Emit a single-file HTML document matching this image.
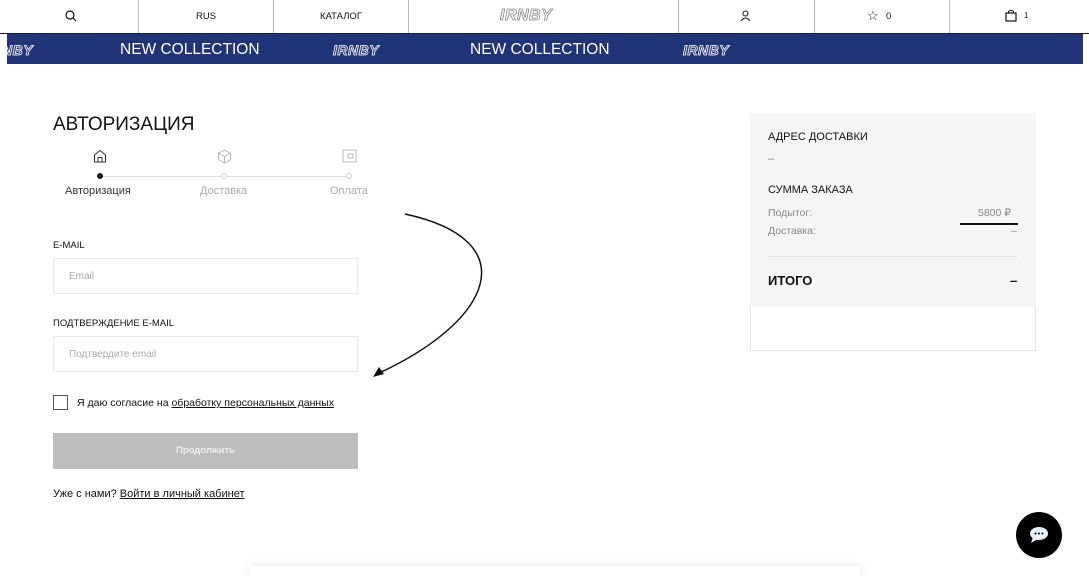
<!DOCTYPE html>
<html><head><meta charset="utf-8"><style>
*{box-sizing:border-box;margin:0;padding:0}
body{width:1089px;height:571px;overflow:hidden;background:#fff;font-family:"Liberation Sans",sans-serif;color:#111;position:relative}
.a{position:absolute}
.hd{top:0;left:0;width:1089px;height:34px;border-bottom:1px solid #222}
.vl{top:0;width:1px;height:33px;background:#bbb}
.c{font-size:9.5px;text-align:center;top:11px}
.logo{font-weight:bold;font-style:italic;color:transparent;-webkit-text-stroke:0.8px #888;letter-spacing:0.5px}
.band{top:34px;left:7px;width:1076px;height:30px;background:#213477}
.band span{position:absolute;top:7px;color:#fff;font-size:15.5px}
.band span.logo{color:transparent;-webkit-text-stroke:0.8px #fff;font-size:14px;top:8px}
.lbl{font-size:9.5px}
.inp{border:1px solid #e8e8e8;width:305px;height:36px;left:53px;font-size:10px;color:#aaa;padding:12px 15px}
.g{color:#888}
</style></head><body>
<div class="a hd"></div>
<div class="a vl" style="left:138px"></div><div class="a vl" style="left:273px"></div><div class="a vl" style="left:408px"></div><div class="a vl" style="left:678px"></div><div class="a vl" style="left:814px"></div><div class="a vl" style="left:949px"></div>
<svg class="a" style="left:65px;top:10px" width="12" height="12" viewBox="0 0 12 12"><circle cx="5" cy="5" r="4" fill="none" stroke="#111" stroke-width="1.2"/><line x1="8" y1="8" x2="11" y2="11" stroke="#111" stroke-width="1.2"/></svg>
<div class="a c" style="left:180px;width:52px">RUS</div>
<div class="a c" style="left:306px;width:70px">КАТАЛОГ</div>
<div class="a logo" style="left:500px;top:7px;font-size:16px">IRNBY</div>
<svg class="a" style="left:740px;top:10px" width="11" height="12" viewBox="0 0 11 12"><circle cx="5.5" cy="3.5" r="2.5" fill="none" stroke="#111"/><path d="M1 11 Q5.5 5 10 11" fill="none" stroke="#111"/></svg>
<div class="a" style="left:867px;top:8px;font-size:13px">☆</div><div class="a c" style="left:886px;top:11px">0</div>
<svg class="a" style="left:1005px;top:9px" width="12" height="13" viewBox="0 0 12 13"><rect x="1" y="4" width="10" height="8" fill="none" stroke="#111" stroke-width="1.2"/><path d="M3.5 4V2.5Q6 0 8.5 2.5V4" fill="none" stroke="#111"/></svg><div class="a c" style="left:1024px;top:11px;font-size:8px">1</div>
<div class="a band">
<span class="logo" style="left:-20px">IRNBY</span>
<span style="left:113px">NEW COLLECTION</span>
<span class="logo" style="left:326px">IRNBY</span>
<span style="left:463px">NEW COLLECTION</span>
<span class="logo" style="left:676px">IRNBY</span>
</div>
<div class="a" style="left:53px;top:114px;font-size:19px">АВТОРИЗАЦИЯ</div>
<svg class="a" style="left:93px;top:149px" width="14" height="14" viewBox="0 0 14 14"><path d="M1.5 13V6L7 1.5 12.5 6V13ZM5 13V8.5H9V13" fill="none" stroke="#333"/></svg>
<svg class="a" style="left:217px;top:149px" width="15" height="15" viewBox="0 0 15 15"><path d="M7.5 1 13.5 4.3V10.7L7.5 14 1.5 10.7V4.3ZM1.5 4.3 7.5 7.6 13.5 4.3M7.5 7.6V14" fill="none" stroke="#bbb"/></svg>
<svg class="a" style="left:342px;top:149px" width="15" height="14" viewBox="0 0 15 14"><rect x="1" y="1" width="13" height="12" fill="none" stroke="#bbb"/><rect x="6" y="5" width="5" height="4" fill="none" stroke="#bbb"/></svg>
<div class="a" style="left:100px;top:176px;width:250px;height:1px;background:#ddd"></div>
<div class="a" style="left:97px;top:173px;width:6px;height:6px;border-radius:50%;background:#111"></div>
<div class="a" style="left:221px;top:173px;width:6px;height:6px;border-radius:50%;background:#fff;border:1px solid #ccc"></div>
<div class="a" style="left:346px;top:173px;width:6px;height:6px;border-radius:50%;background:#fff;border:1px solid #ccc"></div>
<div class="a" style="left:65px;top:185px;font-size:11px;color:#333">Авторизация</div>
<div class="a g" style="left:200px;top:185px;font-size:11px;color:#aaa">Доставка</div>
<div class="a g" style="left:330px;top:185px;font-size:11px;color:#aaa">Оплата</div>
<div class="a lbl" style="left:53px;top:240px">E-MAIL</div>
<div class="a inp" style="top:258px">Email</div>
<div class="a lbl" style="left:53px;top:318px">ПОДТВЕРЖДЕНИЕ E-MAIL</div>
<div class="a inp" style="top:336px">Подтвердите email</div>
<div class="a" style="left:53px;top:395px;width:15px;height:15px;border:1px solid #555"></div>
<div class="a" style="left:77px;top:397px;font-size:10.5px">Я даю согласие на <u>обработку персональных данных</u></div>
<div class="a" style="left:53px;top:433px;width:305px;height:36px;background:#bdbdbd;color:#eee;font-size:9.5px;font-weight:bold;text-align:center;line-height:36px">Продолжить</div>
<div class="a" style="left:53px;top:488px;font-size:11px">Уже с нами? <u>Войти в личный кабинет</u></div>
<svg class="a" style="left:365px;top:210px" width="130" height="170" viewBox="0 0 130 170"><path d="M40 4 C160 30 130 110 12 164" fill="none" stroke="#111" stroke-width="1.5"/><path d="M8 167 L14 157 L19 164 Z" fill="#111"/></svg>
<div class="a" style="left:750px;top:113px;width:286px;height:194px;background:#f5f5f5"></div>
<div class="a" style="left:750px;top:307px;width:286px;height:44px;border:1px solid #e6e6e6;border-top:none"></div>
<div class="a" style="left:768px;top:131px;font-size:11px">АДРЕС ДОСТАВКИ</div>
<div class="a g" style="left:768px;top:153px;font-size:11px">–</div>
<div class="a" style="left:768px;top:184px;font-size:11px">СУММА ЗАКАЗА</div>
<div class="a g" style="left:768px;top:207px;font-size:10.5px">Подытог:</div>
<div class="a g" style="left:978px;top:207px;font-size:10.5px">5800 ₽</div>
<div class="a" style="left:960px;top:223px;width:58px;height:2px;background:#111"></div>
<div class="a g" style="left:768px;top:225px;font-size:10.5px">Доставка:</div>
<div class="a g" style="left:1011px;top:225px;font-size:10.5px">–</div>
<div class="a" style="left:768px;top:256px;width:249px;height:1px;background:#e3e3e3"></div>
<div class="a" style="left:768px;top:273px;font-size:13px;font-weight:bold">ИТОГО</div>
<div class="a" style="left:1010px;top:273px;font-size:13px;font-weight:bold">–</div>
<div class="a" style="left:1016px;top:512px;width:46px;height:46px;border-radius:50%;background:#000"></div>
<svg class="a" style="left:1028px;top:524px" width="22" height="22" viewBox="0 0 22 22"><ellipse cx="11" cy="9.5" rx="9" ry="6.5" fill="#eaf2fb"/><path d="M5 13 L3 19 L10 15Z" fill="#eaf2fb"/><circle cx="7.5" cy="9.5" r="1" fill="#000"/><circle cx="11" cy="9.5" r="1" fill="#000"/><circle cx="14.5" cy="9.5" r="1" fill="#000"/></svg>
<div class="a" style="left:250px;top:566px;width:610px;height:10px;box-shadow:0 0 10px rgba(0,0,0,0.12)"></div>
</body></html>
